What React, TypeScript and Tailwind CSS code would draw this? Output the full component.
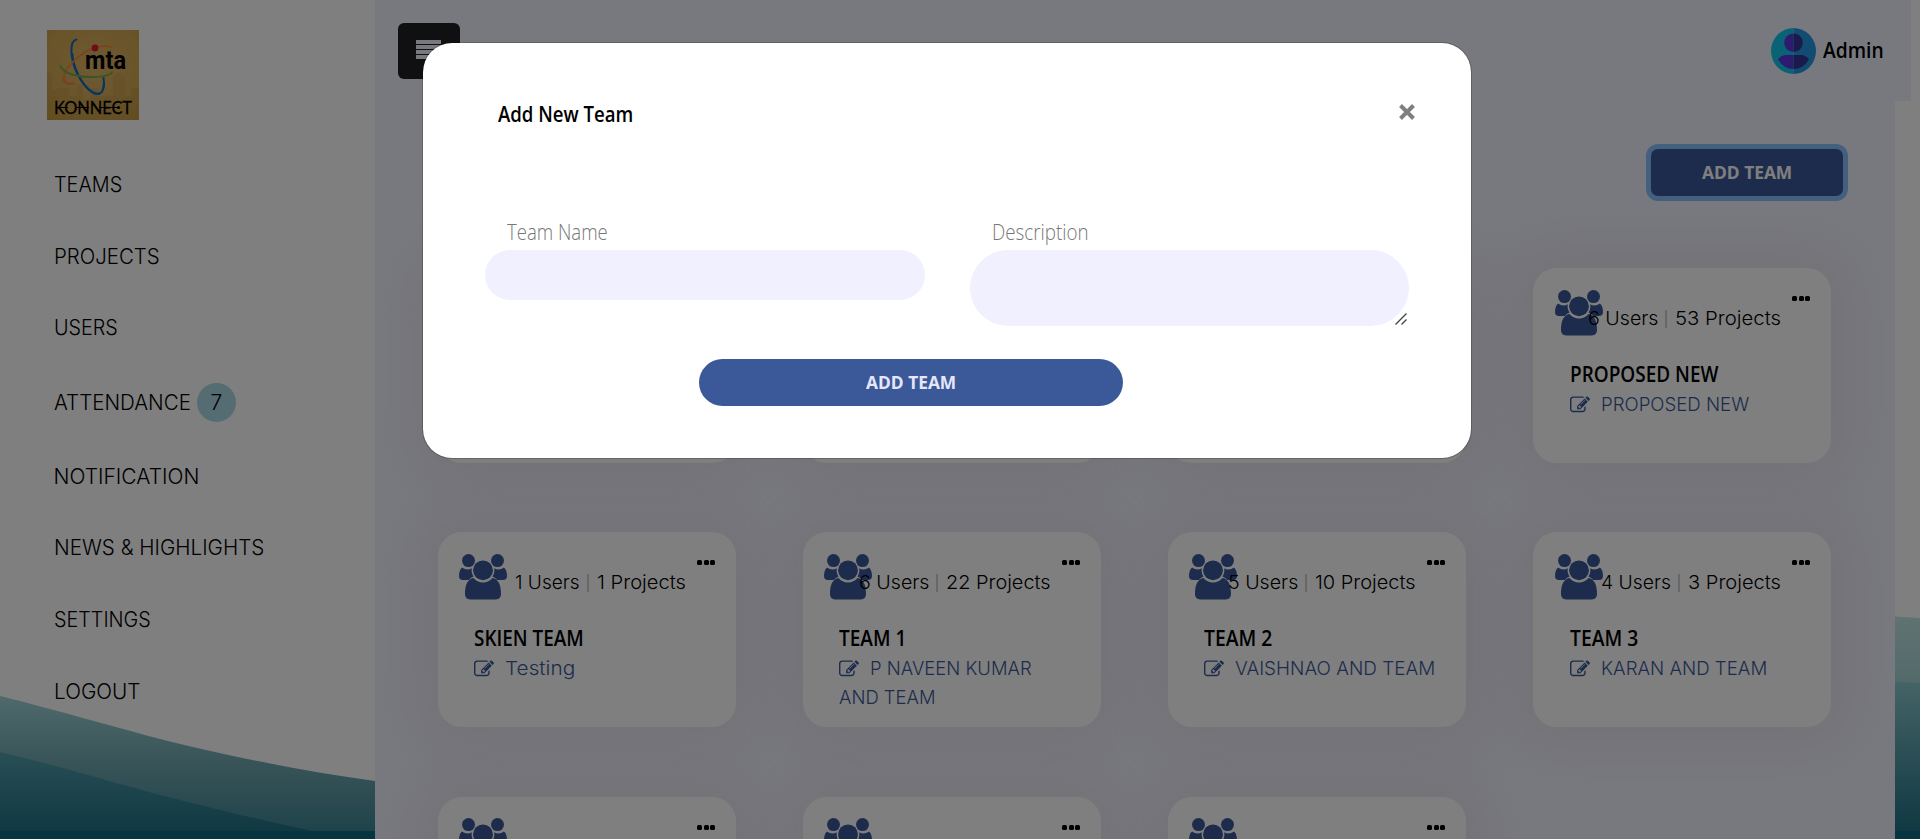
import { useLayoutEffect, useRef, useState } from "react";
import type { ReactNode } from "react";

/** One line of text, condensed or widened horizontally to fill `w` pixels. */
function Fit({ w, className = "", children }: { w: number; className?: string; children: ReactNode }) {
  const ref = useRef<HTMLSpanElement>(null);
  const [scale, setScale] = useState(1);
  useLayoutEffect(() => {
    if (ref.current) setScale(w / ref.current.offsetWidth);
  }, [w]);
  return (
    <span className={`inline-block shrink-0 whitespace-nowrap ${className}`} style={{ width: w }}>
      <span ref={ref} className="inline-block origin-left" style={{ transform: `scaleX(${scale})` }}>
        {children}
      </span>
    </span>
  );
}

const nav = [
  { label: "TEAMS", w: 68 },
  { label: "PROJECTS", w: 106 },
  { label: "USERS", w: 64 },
  { label: "ATTENDANCE", w: 137, badge: "7" },
  { label: "NOTIFICATION", w: 146 },
  { label: "NEWS & HIGHLIGHTS", w: 210 },
  { label: "SETTINGS", w: 97 },
  { label: "LOGOUT", w: 87 },
];

type Team = {
  users: string;
  usersW: number;
  projects: string;
  projectsW: number;
  name: string;
  nameW: number;
  desc: [string, number][];
};

const teams: Team[] = [
  { users: "3 Users", usersW: 71, projects: "4 Projects", projectsW: 95, name: "DESIGN", nameW: 70, desc: [["DESIGN", 80]] },
  { users: "3 Users", usersW: 71, projects: "4 Projects", projectsW: 95, name: "FINANCE", nameW: 80, desc: [["FINANCE", 90]] },
  { users: "3 Users", usersW: 71, projects: "4 Projects", projectsW: 95, name: "HR", nameW: 30, desc: [["HR", 30]] },
  { users: "6 Users", usersW: 70, projects: "53 Projects", projectsW: 106, name: "PROPOSED NEW", nameW: 148, desc: [["PROPOSED NEW", 148]] },
  { users: "1 Users", usersW: 65, projects: "1 Projects", projectsW: 89, name: "SKIEN TEAM", nameW: 110, desc: [["Testing", 70]] },
  { users: "6 Users", usersW: 70, projects: "22 Projects", projectsW: 105, name: "TEAM 1", nameW: 67, desc: [["P NAVEEN KUMAR", 162], ["AND TEAM", 97]] },
  { users: "5 Users", usersW: 70, projects: "10 Projects", projectsW: 101, name: "TEAM 2", nameW: 68, desc: [["VAISHNAO AND TEAM", 200]] },
  { users: "4 Users", usersW: 70, projects: "3 Projects", projectsW: 93, name: "TEAM 3", nameW: 68, desc: [["KARAN AND TEAM", 166]] },
  { users: "5 Users", usersW: 70, projects: "10 Projects", projectsW: 101, name: "TEAM 4", nameW: 68, desc: [["TEAM 4", 69]] },
  { users: "4 Users", usersW: 70, projects: "11 Projects", projectsW: 99, name: "TEAM 5", nameW: 68, desc: [["TEAM 5", 69]] },
  { users: "2 Users", usersW: 70, projects: "1 Projects", projectsW: 89, name: "TEAM 6", nameW: 68, desc: [["TEAM 6", 69]] },
];

function UsersIcon() {
  const side =
    "M3 13.5C1 15 0 18.5 0 22Q0 26 4 26H10C11 24.5 12.5 23.3 14.5 22.5C12.8 20 12.3 17 12.8 14.2C9.5 16.3 6 15.5 3 13.5Z";
  return (
    <svg width="48" height="46" viewBox="0 0 48 46" fill="#3b5998">
      <circle cx="9.5" cy="6.6" r="6.5" />
      <circle cx="38.5" cy="6.6" r="6.5" />
      <path d={side} />
      <path d={side} transform="translate(48 0) scale(-1 1)" />
      <circle cx="24" cy="16.3" r="9.9" />
      <path d="M14.5 24C17 27 20 28.4 24 28.4C28 28.4 31 27 33.5 24C39.5 25 42 31 42 40Q42 45.4 36.8 45.4H11.2Q6 45.4 6 40C6 31 8.5 25 14.5 24Z" />
    </svg>
  );
}

function EditIcon() {
  return (
    <svg width="20" height="20" viewBox="0 0 1792 1792" fill="#3b5998" className="mr-[11px] shrink-0">
      <path d="M888 1184l116-116-152-152-116 116v56h96v96h56zm440-720q-16-16-33 1l-350 350q-17 17-1 33t33-1l350-350q17-17 1-33zm80 594v190q0 119-84.5 203.5t-203.5 84.5h-832q-119 0-203.5-84.5t-84.5-203.5v-832q0-119 84.5-203.5t203.5-84.5h832q63 0 117 25 15 7 18 23 3 17-9 29l-49 49q-14 14-32 8-23-6-45-6h-832q-66 0-113 47t-47 113v832q0 66 47 113t113 47h832q66 0 113-47t47-113v-126q0-13 9-22l64-64q15-15 35-7t20 29zm-96-738l288 288-672 672h-288v-288zm444 132l-92 92-288-288 92-92q28-28 68-28t68 28l152 152q28 28 28 68t-28 68z" />
    </svg>
  );
}

function TeamCard({ team }: { team: Team }) {
  return (
    <div className="relative h-[195px] rounded-[24px] bg-white shadow-[0_0_46px_26px_rgba(181,162,165,0.16)]">
      <div className="absolute left-[21.5px] top-[21.5px]">
        <UsersIcon />
      </div>
      <div className="flex h-[34px] justify-end gap-[1.5px] pr-[21px] pt-[28px]">
        <i className="h-[5px] w-[5px] rounded-[1.5px] bg-black" />
        <i className="h-[5px] w-[5px] rounded-[1.5px] bg-black" />
        <i className="h-[5px] w-[5px] rounded-[1.5px] bg-black" />
      </div>
      <div className="relative flex h-[34px] items-center justify-end pr-[50.5px] text-[18.8px] font-light leading-[34px] text-black">
        <Fit w={team.usersW}>{team.users}</Fit>
        <span className="ml-[7px] mr-[8px] h-[18px] w-[2px] bg-[#cfcfcf]" />
        <Fit w={team.projectsW}>{team.projects}</Fit>
      </div>
      <div className="pl-[36.5px] pt-[23.5px] font-['Open_Sans','Noto_Sans',sans-serif] text-[21px] font-[580] leading-[28px] text-black">
        <Fit w={team.nameW}>{team.name}</Fit>
      </div>
      <div className="pl-[36.5px] text-[19px] font-light leading-[29px] text-[#3b5998]">
        {team.desc.map(([line, w], i) => (
          <div key={line} className={i === 0 ? "mt-[2.5px] flex h-[29px] items-center" : "flex h-[29px] items-center"}>
            {i === 0 && <EditIcon />}
            <Fit w={w}>{line}</Fit>
          </div>
        ))}
      </div>
    </div>
  );
}

function Logo() {
  return (
    <svg width="92" height="90" viewBox="0 0 92 90">
      <defs>
        <radialGradient id="paper" cx="50%" cy="42%" r="75%">
          <stop offset="0" stopColor="#dcb468" />
          <stop offset="0.7" stopColor="#d4a852" />
          <stop offset="1" stopColor="#cc9c40" />
        </radialGradient>
      </defs>
      <rect width="92" height="90" fill="url(#paper)" />
      <path
        d="M0 90V43H5V60H9V58H22V66H30V54H36V70H44V58H52V66H66V46L72 42L78 47V66H84V58H92V90Z"
        fill="#a8853c"
        opacity="0.18"
      />
      <g fill="none" strokeLinecap="round">
        <path d="M29.5 9.5C22 11 23 30 31 45C39 60 48 66 53 63.5C57 61 57.5 54 56.5 48" stroke="#0b6cc0" strokeWidth="2" />
        <path d="M25.5 24C26 37 34 52 41 58.500C49 66 56 66 56.500 55" stroke="#0b6cc0" strokeWidth="1.800" />
        <path d="M65 17.500C54 13 38 19 25 33C14 45 14 55 27 53.500" stroke="#ee8a3c" strokeWidth="1.800" />
        <path d="M17 45C14.500 52 18 55 27 53.500" stroke="#ee8a3c" strokeWidth="2.400" />
        <path d="M13.500 36C17 44 31 47 44 47C55 47 63 45 65 42.500" stroke="#77a84a" strokeWidth="1.900" />
      </g>
      <circle cx="48" cy="18" r="3.400" fill="#e21836" />
      <text
        x="38"
        y="39"
        fontFamily="Roboto, sans-serif"
        fontWeight="700"
        fontSize="26"
        textLength="41"
        lengthAdjust="spacingAndGlyphs"
        fill="#000"
      >
        mta
      </text>
      <text
        x="7"
        y="84"
        fontFamily="Lato, sans-serif"
        fontWeight="400"
        fontSize="18"
        textLength="78"
        lengthAdjust="spacingAndGlyphs"
        fill="#000"
        stroke="#000"
        strokeWidth="0.300"
      >
        KONNECT
      </text>
      <path d="M10 77.500H21M29 77.500H42M52 77.500H72" stroke="#000" strokeWidth="1.200" />
      <circle cx="71.500" cy="77.500" r="1.600" fill="#000" />
    </svg>
  );
}

function Avatar() {
  const body = "M7 31.500Q10 27 15 27H30Q35 27 38 31.500Q32 41 22.500 41Q13 41 7 31.500Z";
  return (
    <svg width="45" height="46" viewBox="0 0 45 46">
      <defs>
        <clipPath id="avL">
          <rect width="22.5" height="46" />
        </clipPath>
        <clipPath id="avR">
          <rect x="22.5" width="22.5" height="46" />
        </clipPath>
      </defs>
      <g clipPath="url(#avL)">
        <ellipse cx="22.5" cy="23" rx="22.5" ry="23" fill="#14c4ea" />
        <circle cx="22.500" cy="14.700" r="9.300" fill="#5c34dc" />
        <path d={body} fill="#5c34dc" />
      </g>
      <g clipPath="url(#avR)">
        <ellipse cx="22.5" cy="23" rx="22.500" ry="23" fill="#2499e0" />
        <circle cx="22.500" cy="14.700" r="9.300" fill="#36349a" />
        <path d={body} fill="#36349a" />
      </g>
    </svg>
  );
}

function Waves() {
  return (
    <svg className="absolute inset-0" width="1920" height="839" viewBox="0 0 1920 839">
      <defs>
        <linearGradient id="upper" gradientUnits="userSpaceOnUse" x1="0" y1="696" x2="0" y2="831">
          <stop offset="0" stopColor="#a0d4d8" />
          <stop offset="0.5" stopColor="#70a8b0" />
          <stop offset="1" stopColor="#408696" />
        </linearGradient>
        <linearGradient id="lower" gradientUnits="userSpaceOnUse" x1="0" y1="752" x2="0" y2="831">
          <stop offset="0" stopColor="#529eac" />
          <stop offset="1" stopColor="#207286" />
        </linearGradient>
        <linearGradient id="rightTop" gradientUnits="userSpaceOnUse" x1="0" y1="617" x2="0" y2="682">
          <stop offset="0" stopColor="#c0e6e6" />
          <stop offset="1" stopColor="#a8d4d4" />
        </linearGradient>
        <linearGradient id="rightLow" gradientUnits="userSpaceOnUse" x1="0" y1="682" x2="0" y2="831">
          <stop offset="0" stopColor="#8ac8cc" />
          <stop offset="1" stopColor="#207286" />
        </linearGradient>
      </defs>
      <path d="M0 696C60 711 110 726 167 740.700C230 756 300 771 375 781V839H0Z" fill="url(#upper)" />
      <path d="M0 752C60 766 110 782 167 796.700C220 810 260 820 313 831V839H0Z" fill="url(#lower)" />
      <path d="M1895 616.500L1920 618V839H1895Z" fill="url(#rightTop)" />
      <path d="M1895 682L1920 682.700V839H1895Z" fill="url(#rightLow)" />
      <rect y="831" width="1920" height="8" fill="#0c6a80" />
    </svg>
  );
}

function Modal() {
  return (
    <div className="absolute left-[422px] top-[42px] flex h-[417px] w-[1050px] flex-col rounded-[30px] border border-black/20 bg-white bg-clip-padding px-[62px] font-['Open_Sans','Noto_Sans',sans-serif]">
      <div className="flex h-[142px] items-start justify-between pl-[13px] pt-[56px]">
        <Fit w={135.5} className="pt-px text-[21px] font-[580] leading-[28px] text-black">
          Add New Team
        </Fit>
        <svg width="18" height="18" viewBox="0 0 18 18" className="mr-[-7px] mt-[4px]">
          <path d="M2.500 2.500L15.500 15.500M15.500 2.500L2.500 15.500" stroke="#7f7f7f" strokeWidth="4" />
        </svg>
      </div>
      <div className="flex gap-[45px] pt-[32px]">
        <label className="flex w-[440px] flex-col">
          <Fit w={101} className="ml-[22px] h-[33px] pt-px text-[21.5px] font-light leading-[28px] text-[#777]">
            Team Name
          </Fit>
          <span className="h-[50px] rounded-[25px] bg-[#f1f0ff]" />
        </label>
        <label className="flex w-[439px] flex-col">
          <Fit w={97} className="ml-[22px] h-[33px] pt-px text-[21.5px] font-light leading-[28px] text-[#777]">
            Description
          </Fit>
          <span className="flex h-[76px] items-end justify-end rounded-[38px] bg-[#f1f0ff] pb-px pr-[2px]">
            <svg width="12" height="12" viewBox="0 0 12 12">
              <path d="M0.500 11.500L11.500 0.500M6.500 11.500L11.500 6.500" stroke="#444" strokeWidth="1.400" />
            </svg>
          </span>
        </label>
      </div>
      <button className="ml-[214px] mt-[33px] flex h-[47px] w-[424px] items-center justify-center rounded-[24px] bg-[#3b5998] pb-px text-[18.5px] font-bold text-[#e6e6fa]">
        <Fit w={90}>ADD TEAM</Fit>
      </button>
    </div>
  );
}

export default function App() {
  return (
    <div className="relative h-[839px] w-[1920px] overflow-hidden bg-white font-[Inter,sans-serif]">
      <Waves />
      <div className="relative flex h-full">
        <aside className="w-[375px] shrink-0 pl-[47px] pt-[30px]">
          <Logo />
          <nav className="mt-[29px] pl-[6.5px] text-[21px] font-light text-black">
            {nav.map((n) => (
              <div key={n.label} className={n.badge ? "flex h-[77px] items-center" : "flex h-[71.6px] items-center"}>
                <Fit w={n.w}>{n.label}</Fit>
                {n.badge && (
                  <span className="ml-[6.5px] flex size-[39px] items-center justify-center rounded-full bg-[#add8e6]">
                    {n.badge}
                  </span>
                )}
              </div>
            ))}
          </nav>
        </aside>
        <div className="flex w-[1536px] shrink-0 flex-col">
          <header className="flex h-[101px] shrink-0 items-start justify-between bg-[#f1f2fe] pl-[23px] pr-[28px] pt-[23px]">
            <div className="flex h-[56px] w-[62px] flex-col gap-px rounded-[6px] bg-[#212124] pl-[18px] pt-[17px]">
              <i className="h-[4px] w-[25px] bg-[#f1f2fe]" />
              <i className="h-[4px] w-[25px] bg-[#f1f2fe]" />
              <i className="h-[4px] w-[25px] bg-[#f1f2fe]" />
              <i className="h-[4px] w-[25px] bg-[#f1f2fe]" />
            </div>
            <div className="flex items-center gap-[7px] pt-[5px]">
              <Avatar />
              <Fit w={60.5} className="pb-[3px] font-['Open_Sans','Noto_Sans',sans-serif] text-[21px] font-[580] leading-[28px] text-black">
                Admin
              </Fit>
            </div>
          </header>
          <main className="min-h-0 w-[1520px] grow overflow-hidden bg-[#f1f3fe]">
            <div className="flex h-[167px] justify-end pr-[52px] pt-[48px]">
              <button className="flex h-[47px] w-[192px] items-center justify-center rounded-[7px] bg-[#3b5998] pb-px font-['Open_Sans','Noto_Sans',sans-serif] text-[18.5px] font-bold text-white shadow-[0_0_0_5px_#88c0fe]">
                <Fit w={90}>ADD TEAM</Fit>
              </button>
            </div>
            <div className="grid grid-cols-[repeat(4,298.4px)] gap-x-[66.7px] gap-y-[69.4px] pl-[62.8px]">
              {teams.map((t, i) => (
                <TeamCard key={i} team={t} />
              ))}
            </div>
          </main>
        </div>
      </div>
      <div className="absolute inset-0 bg-black/50" />
      <Modal />
    </div>
  );
}
